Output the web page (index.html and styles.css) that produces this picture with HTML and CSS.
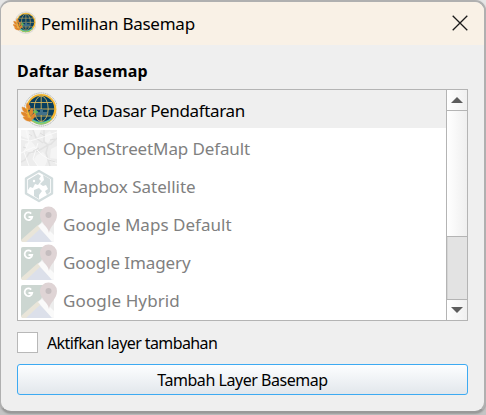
FILE: index.html
```html
<!DOCTYPE html>
<html lang="id">
<head>
<meta charset="utf-8">
<title>Pemilihan Basemap</title>
<link rel="stylesheet" href="styles.css">
</head>
<body>
<svg class="symbols" aria-hidden="true">
  <defs>
    <symbol id="globe" viewBox="0 0 36 36">
      <circle cx="20" cy="17.5" r="17" fill="#eeeeeb"/>
      <circle cx="20" cy="17.5" r="16.6" fill="none" stroke="#b0b5b5" stroke-width="1" stroke-dasharray="1.2 .7"/>
      <circle cx="20.2" cy="17.3" r="15.2" fill="#f2b632"/>
      <path d="M9 27 Q20 38 31 27 L29 24 H11Z" fill="#4bb8b1"/>
      <path d="M12 29 Q20 34 28 29" fill="none" stroke="#91cf60" stroke-width="1.4"/>
      <circle cx="20.2" cy="16.8" r="13" fill="#073f60"/>
      <g fill="none" stroke="#d5b45a" stroke-width=".9">
        <path d="M20.2 4V29.5M7.5 17H33M9.5 10.5H31M10 24H30.5"/>
        <ellipse cx="20.2" cy="16.8" rx="7" ry="12.8"/>
      </g>
      <path d="M14 17h2v3h3v-3h3v3h4v3H15z" fill="#42718a"/>
      <path d="M12 20h5M14.5 17.5v5" stroke="#67bd54" stroke-width="1.5"/>
      <g fill="#df862c" stroke="#e9963a" stroke-width=".5">
        <path d="M6 11q5 3 2 7q-4-3-2-7zM1 15q6 1 5 6q-5-1-5-6zM0 20q7 0 7 5q-6 0-7-5zM2 25q7-1 9 4q-7 1-9-4zM11 16q3 5-2 8q-2-5 2-8zM14 21q1 5-4 7q-1-5 4-7z"/>
      </g>
    </symbol>
    <symbol id="streets" viewBox="0 0 36 36">
      <path d="M0 0H36V36H0z" fill="#ededed"/>
      <path d="M0 0H7L10 5L7 9L0 6zM12 0H20L17 7L13 5zM23 5L29 1L32 7L27 13L22 10zM4 14L10 11L16 18L11 24L4 20zM16 25L22 22L27 29L24 36H16L13 29zM30 19L36 16V29L29 28z" fill="#f5f5f5"/>
      <path d="M23 0V12L27 15L25 23L29 36M36 8L30 14L27 15L17 21L8 23L4 30L0 32M12 0L15 8L22 13" fill="none" stroke="#e2e2e2" stroke-width="1.5"/>
      <path d="M0 9L9 11L22 7L36 2M5 0L8 12L3 22L8 36M0 23L13 17L21 25L36 34M17 13L12 29L17 36" fill="none" stroke="#fafafa" stroke-width="1"/>
      <path d="M8 4l3 2M12 21l6-3M28 30l6 2M2 17l3 1M19 3l5 3M29 10l5-1" stroke="#dedede" stroke-width="1"/>
    </symbol>
    <symbol id="hexagon" viewBox="0 0 36 36">
      <path d="M18 3L31 10.5V25.5L18 33L5 25.5V10.5z" fill="#fff" stroke="#d2dcdd" stroke-width="2.4" stroke-linejoin="round"/>
      <path d="M7 12L17 6L20 8L18 11L20 13L17 17L14 16L12 20L9 19L7 22zM22 7L29 11V24L26 27L24 23L27 21L25 17L22 18L19 16L23 12zM13 22L18 20L21 23L18 27L18 31L13 28z" fill="#d2dcdd"/>
      <circle cx="13" cy="13" r="1.2" fill="#fff"/>
    </symbol>
    <symbol id="pinmap" viewBox="0 0 36 36">
      <path d="M2 3H31Q33 3 33 5V34Q33 36 31 36H2Q0 36 0 34V5Q0 3 2 3z" fill="#ededed"/>
      <path d="M2 3H27L20 17L0 35V5Q0 3 2 3z" fill="#ccd6d1"/>
      <path d="M17 21L32 36H3z" fill="#dce0ea"/>
      <path d="M0 34L17 19L20 22L5 36H1z" fill="#e9e5d9"/>
      <path d="M17 20L21 17L33 29V35L31 36z" fill="#fafafa"/>
      <path d="M28 27C27 20 19 17 19 9A8.5 8.5 0 0 1 36 9C36 17 29 20 28 27z" fill="#dfd4d5"/>
      <circle cx="27.5" cy="9" r="3" fill="#c5bdbf"/>
      <path d="M10.2 7.6A3.8 3.8 0 1 0 11.2 11H7.5" fill="none" stroke="#fff" stroke-width="1.8"/>
    </symbol>
  </defs>
</svg>
<main class="window">
  <header class="titlebar">
    <svg class="app-icon"><use href="#globe"/></svg>
    <span class="title">Pemilihan Basemap</span>
    <svg class="close" viewBox="0 0 16 16"><path d="M.7.7L15.3 15.3M15.3.7L.7 15.3"/></svg>
  </header>
  <section class="content">
    <h1 class="heading"><span>Daftar Basemap</span></h1>
    <div class="listbox">
      <ul class="items">
        <li class="item selected"><svg class="icon"><use href="#globe"/></svg><span class="n1">Peta Dasar Pendaftaran</span></li>
        <li class="item"><svg class="icon"><use href="#streets"/></svg><span class="n2">OpenStreetMap Default</span></li>
        <li class="item"><svg class="icon"><use href="#hexagon"/></svg><span class="n3">Mapbox Satellite</span></li>
        <li class="item"><svg class="icon"><use href="#pinmap"/></svg><span class="n4">Google Maps Default</span></li>
        <li class="item"><svg class="icon"><use href="#pinmap"/></svg><span class="n5">Google Imagery</span></li>
        <li class="item"><svg class="icon"><use href="#pinmap"/></svg><span class="n6">Google Hybrid</span></li>
      </ul>
      <div class="scrollbar">
        <div class="arrow up"><svg viewBox="0 0 12 6"><path d="M0 6L6 0L12 6z"/></svg></div>
        <div class="thumb"></div>
        <div class="track"></div>
        <div class="arrow down"><svg viewBox="0 0 12 6"><path d="M0 0L6 6L12 0z"/></svg></div>
      </div>
    </div>
    <label class="option"><span class="box"></span><span class="option-text">Aktifkan layer tambahan</span></label>
    <button class="submit"><span>Tambah Layer Basemap</span></button>
  </section>
</main>
</body>
</html>
```

FILE: styles.css
```css
* { box-sizing: border-box; }
html { background: linear-gradient(#e6e6e6, #c4c4c4); }
body {
  margin: 0;
  height: 415px;
  overflow: hidden;
  font-family: "Noto Sans", sans-serif;
  color: #000;
}
svg { display: block; flex: none; }
.symbols { position: absolute; width: 0; height: 0; }
.window {
  width: 486px;
  height: 413px;
  border: 2px solid #b0b0b0;
  border-left-width: 1px;
  border-bottom-color: #999;
  border-radius: 11px;
  background: #efefef;
  overflow: hidden;
  box-shadow: 0 1px 2px #999;
}
.titlebar {
  display: flex;
  align-items: center;
  height: 43px;
  padding: 0 16px 0 12px;
  background: #f9f1e6;
}
.app-icon { width: 23px; height: 24px; margin-top: -1px; }
.title { margin: -1px auto 0 5px; font-size: 17px; letter-spacing: -.25px; white-space: nowrap; }
.close { width: 16px; height: 16px; margin-top: -2px; fill: none; stroke: #1a1a1a; stroke-width: 1.3; }
.content { padding: 0 16px; }
.heading { margin: 0; height: 44px; padding-top: 14px; font-size: 16px; line-height: 24px; white-space: nowrap; letter-spacing: .17px; }
.listbox { display: flex; width: 451px; height: 232px; border: 1px solid #b4b4b4; background: #fff; overflow: hidden; }
.items { flex: 1; margin: 0; padding: 0; list-style: none; color: #808080; }
.item { display: flex; align-items: center; height: 38px; padding-left: 3px; gap: 6px; font-size: 17px; white-space: nowrap; }
.item span { line-height: 24px; padding-top: 3px; }
.n1 { letter-spacing: -.35px; }
.n2 { letter-spacing: -.12px; }
.n3 { letter-spacing: 0; }
.n4 { letter-spacing: .02px; }
.n5 { letter-spacing: -.08px; }
.n6 { letter-spacing: .12px; }
.selected { background: #efefef; color: #000; }
.icon { width: 36px; height: 36px; margin-top: 2px; }
.scrollbar { width: 21px; display: flex; flex-direction: column; border-left: 1px solid #b4b4b4; }
.arrow { height: 20px; display: grid; place-items: center; background: linear-gradient(90deg, #fff, #f0f0f0); }
.arrow svg { width: 12px; height: 6px; fill: #5c5c5c; }
.thumb { height: 127px; border: solid #b4b4b4; border-width: 1px 0; background: linear-gradient(90deg, #fff, #efefef); }
.track { flex: 1; background: #e3e3e3; border-left: 1px solid #d4d4d4; }
.down { height: 21px; border-top: 1px solid #b4b4b4; }
.option { display: flex; align-items: center; height: 21px; margin-top: 11px; gap: 9px; font-size: 16px; white-space: nowrap; letter-spacing: -.6px; }
.box { width: 21px; height: 21px; border: 1px solid #b8b8b8; background: #fff; }
.submit {
  display: flex;
  align-items: center;
  justify-content: center;
  width: 451px;
  height: 31px;
  margin-top: 11px;
  padding: 0;
  border: 1px solid #3daaf2;
  border-radius: 3px;
  background: linear-gradient(#fdfeff, #e2e7ec);
  font: 16px "Noto Sans", sans-serif;
  letter-spacing: -.46px;
  color: #000;
}
```
